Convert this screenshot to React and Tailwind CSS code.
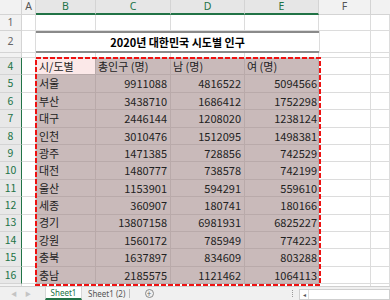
import React from 'react';

const data = [
  ['서울', 9911088, 4816522, 5094566],
  ['부산', 3438710, 1686412, 1752298],
  ['대구', 2446144, 1208020, 1238124],
  ['인천', 3010476, 1512095, 1498381],
  ['광주', 1471385, 728856, 742529],
  ['대전', 1480777, 738578, 742199],
  ['울산', 1153901, 594291, 559610],
  ['세종', 360907, 180741, 180166],
  ['경기', 13807158, 6981931, 6825227],
  ['강원', 1560172, 785949, 774223],
  ['충북', 1637897, 834609, 803288],
  ['충남', 2185575, 1121462, 1064113],
];

const font = { fontFamily: '"Noto Sans", "Noto Sans CJK KR", sans-serif' };

function RowHdr({ n, sel, h }) {
  return (
    <div
      className={`w-[22px] shrink-0 ${h} flex items-center justify-center border-b border-b-[#d4d4d4] border-r text-[10.5px] leading-none ${
        sel ? 'bg-[#e8e8e8] text-[#217346] border-r-[#217346]' : 'bg-[#f2f2f2] text-[#666] border-r-[#d4d4d4]'
      }`}
    >
      {n}
    </div>
  );
}

function Cell({ w, h, children, cls = '' }) {
  return (
    <div className={`${w} ${h} shrink-0 border-r border-b border-[#dcdcdc] overflow-hidden ${cls}`}>{children}</div>
  );
}

export default function App() {
  return (
    <div className="w-[390px] h-[300px] flex flex-col bg-white overflow-hidden select-none" style={font}>
      <div className="relative flex-1 overflow-hidden">
        {/* column header */}
        <div className="flex h-[15px]">
          <div className="w-[22px] shrink-0 bg-[#f2f2f2] border-r border-b border-[#d4d4d4]" />
          <div className="w-[14px] shrink-0 bg-[#f2f2f2] border-r border-b border-[#d4d4d4] flex items-center justify-center text-[10.5px] text-[#555]">A</div>
          <div className="w-[60px] shrink-0 bg-[#e6e6e6] border-r border-r-[#d4d4d4] border-b-2 border-b-[#217346] flex items-center justify-center text-[10.5px] text-[#217346]">B</div>
          <div className="w-[75px] shrink-0 bg-[#e6e6e6] border-r border-r-[#d4d4d4] border-b-2 border-b-[#217346] flex items-center justify-center text-[10.5px] text-[#217346]">C</div>
          <div className="w-[74px] shrink-0 bg-[#e6e6e6] border-r border-r-[#d4d4d4] border-b-2 border-b-[#217346] flex items-center justify-center text-[10.5px] text-[#217346]">D</div>
          <div className="w-[74px] shrink-0 bg-[#e6e6e6] border-r border-r-[#d4d4d4] border-b-2 border-b-[#217346] flex items-center justify-center text-[10.5px] text-[#217346]">E</div>
          <div className="w-[52px] shrink-0 bg-[#f2f2f2] border-r border-b border-[#d4d4d4] flex items-center justify-center text-[10.5px] text-[#555]">F</div>
          <div className="flex-1 bg-[#f2f2f2] border-b border-[#d4d4d4]" />
        </div>

        {/* row 1 */}
        <div className="flex h-[16px]">
          <RowHdr n="1" h="h-[16px]" />
          <Cell w="w-[14px]" h="h-[16px]" />
          <Cell w="w-[60px]" h="h-[16px]" />
          <Cell w="w-[75px]" h="h-[16px]" />
          <Cell w="w-[74px]" h="h-[16px]" />
          <Cell w="w-[74px]" h="h-[16px]" />
          <Cell w="w-[52px]" h="h-[16px]" />
          <Cell w="flex-1" h="h-[16px]" />
        </div>

        {/* row 2 title */}
        <div className="flex h-[22px]">
          <RowHdr n="2" h="h-[22px]" />
          <Cell w="w-[14px]" h="h-[22px]" />
          <div className="w-[283px] h-[22px] shrink-0 border-t-2 border-b-2 border-[#8a8a8a] flex items-center justify-center text-[11px] font-bold text-black" style={{ fontFamily: '"Noto Sans CJK KR", sans-serif' }}>
            2020년 대한민국 시도별 인구
          </div>
          <Cell w="w-[52px]" h="h-[22px]" cls="border-l" />
          <Cell w="flex-1" h="h-[22px]" />
        </div>

        {/* row 3 */}
        <div className="flex h-[5px]">
          <div className="w-[22px] h-[5px] shrink-0 bg-[#f2f2f2] border-r border-b border-[#d4d4d4]" />
          <Cell w="w-[14px]" h="h-[5px]" />
          <Cell w="w-[60px]" h="h-[5px]" />
          <Cell w="w-[75px]" h="h-[5px]" />
          <Cell w="w-[74px]" h="h-[5px]" />
          <Cell w="w-[74px]" h="h-[5px]" />
          <Cell w="w-[52px]" h="h-[5px]" />
          <Cell w="flex-1" h="h-[5px]" />
        </div>

        {/* row 4 header */}
        <div className="flex h-[17.4px]" style={{ fontFamily: '"Noto Sans CJK KR", sans-serif' }}>
          <RowHdr n="4" sel h="h-[17.4px]" />
          <Cell w="w-[14px]" h="h-[17.4px]" />
          <div className="w-[60px] h-[17.4px] shrink-0 bg-[#fbe8e8] border-r border-b border-[#b9aaaa] flex items-center pl-[3px] text-[11px] text-[#222] whitespace-nowrap">시/도별</div>
          <div className="w-[75px] h-[17.4px] shrink-0 bg-[#c9baba] border-r border-b border-[#b9aaaa] flex items-center pl-[2px] text-[11px] text-[#222] whitespace-nowrap">총인구 (명)</div>
          <div className="w-[74px] h-[17.4px] shrink-0 bg-[#c9baba] border-r border-b border-[#b9aaaa] flex items-center pl-[2px] text-[11px] text-[#222] whitespace-nowrap">남 (명)</div>
          <div className="w-[74px] h-[17.4px] shrink-0 bg-[#c9baba] border-r border-b border-[#b9aaaa] flex items-center pl-[2px] text-[11px] text-[#222] whitespace-nowrap">여 (명)</div>
          <Cell w="w-[52px]" h="h-[17.4px]" />
          <Cell w="flex-1" h="h-[17.4px]" />
        </div>

        {data.map((r, i) => (
          <div key={i} className="flex h-[17.4px]" style={{ fontFamily: '"Noto Sans CJK KR", sans-serif' }}>
            <RowHdr n={String(i + 5)} sel h="h-[17.4px]" />
            <Cell w="w-[14px]" h="h-[17.4px]" />
            <div className="w-[60px] h-[17.4px] shrink-0 bg-[#c9baba] border-r border-b border-[#b9aaaa] flex items-center pl-[3px] text-[11px] text-[#222]">{r[0]}</div>
            <div className="w-[75px] h-[17.4px] shrink-0 bg-[#c9baba] border-r border-b border-[#b9aaaa] flex items-center justify-end pr-[3px] text-[11px] text-[#222]">{r[1]}</div>
            <div className="w-[74px] h-[17.4px] shrink-0 bg-[#c9baba] border-r border-b border-[#b9aaaa] flex items-center justify-end pr-[3px] text-[11px] text-[#222]">{r[2]}</div>
            <div className="w-[74px] h-[17.4px] shrink-0 bg-[#c9baba] border-r border-b border-[#b9aaaa] flex items-center justify-end pr-[1px] text-[11px] text-[#222]">{r[3]}</div>
            <Cell w="w-[52px]" h="h-[17.4px]" />
            <Cell w="flex-1" h="h-[17.4px]" />
          </div>
        ))}

        {/* row 17 partial */}
        <div className="flex h-[17px]">
          <RowHdr n="" h="h-[17px]" />
          <Cell w="w-[14px]" h="h-[17px]" />
          <Cell w="w-[60px]" h="h-[17px]" />
          <Cell w="w-[75px]" h="h-[17px]" />
          <Cell w="w-[74px]" h="h-[17px]" />
          <Cell w="w-[74px]" h="h-[17px]" />
          <Cell w="w-[52px]" h="h-[17px]" />
          <Cell w="flex-1" h="h-[17px]" />
        </div>

        {/* copy marquee overlay */}
        <svg className="absolute left-[35px] top-[57px] pointer-events-none" width="286" height="229" viewBox="0 0 286 229">
          <rect x="1" y="1" width="284" height="227" fill="none" stroke="#ee1111" strokeWidth="2" strokeDasharray="5 2" />
        </svg>
      </div>

      {/* sheet tabs bar */}
      <div className="h-[14px] shrink-0 flex items-stretch bg-[#f0f0f0] border-t border-[#d0d0d0] text-[8px] leading-none">
        <div className="w-[45px] flex items-center gap-[8px] pl-[11px] text-[6px] text-[#c4c4c4]">
          <span>◀</span>
          <span>▶</span>
        </div>
        <div className="w-[37px] bg-white border-x border-[#d6d6d6] border-b-2 border-b-[#217346] flex items-center justify-center text-[#217346]">Sheet1</div>
        <div className="w-[48px] flex items-center pl-[6px] text-[#555] border-r border-[#bdbdbd] my-[2px]">Sheet1 (2)</div>
        <div className="w-[38px] flex items-center justify-center">
          <span className="w-[9px] h-[9px] rounded-full border border-[#8a8a8a] flex items-center justify-center text-[8px] text-[#666] leading-none">+</span>
        </div>
        <div className="w-[131px] flex items-center justify-end pr-[6px]">
          <span className="flex flex-col gap-[1px]">
            <span className="w-[1px] h-[1px] bg-[#999]" />
            <span className="w-[1px] h-[1px] bg-[#999]" />
            <span className="w-[1px] h-[1px] bg-[#999]" />
            <span className="w-[1px] h-[1px] bg-[#999]" />
          </span>
        </div>
        <div className="flex-1 mt-[2px] bg-white border border-[#cfcfcf] flex items-center">
          <span className="w-[9px] h-full flex items-center justify-center border-r border-[#dedede] text-[6px] text-[#555]">◂</span>
        </div>
      </div>
    </div>
  );
}
